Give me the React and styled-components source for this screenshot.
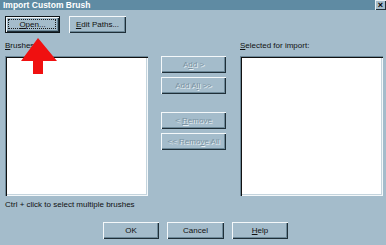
import React from "react"
import styled, { createGlobalStyle } from "styled-components"

const Global = createGlobalStyle`
    * { box-sizing: border-box; }
    body {
        margin: 0;
        background: #a4bccb;
    }
`

const Window = styled.div`
    position: relative;
    display: flex;
    flex-direction: column;
    width: 386px;
    height: 245px;
    overflow: hidden;
    background-color: #a4bccb;
    font-family: "Liberation Sans", Arial, sans-serif;
    font-size: 8px;
    color: #111;
`
const TitleBar = styled.div`
    display: flex;
    justify-content: space-between;
    align-items: center;
    height: 10px;
    padding-left: 3px;
    background-color: #5f8ba3;
    color: #fff;
    font-weight: bold;
    font-size: 8.5px;
`
const CloseBox = styled.div`
    display: flex;
    align-items: center;
    justify-content: center;
    width: 11px;
    height: 10px;
    background-color: #a4bccb;
    box-shadow: inset 1px 1px #e8f0f4, inset -1px -1px #1f2f38;
    color: #000;
    font-weight: bold;
    font-size: 9px;
    line-height: 1;
`
const Body = styled.div`
    display: flex;
    flex-direction: column;
    padding: 6px 3px 0 5px;
`
const Row = styled.div`
    display: flex;
    gap: ${p => p.$gap || 0}px;
    margin-top: ${p => p.$top || 0}px;
    margin-left: ${p => p.$left || 0}px;
`
const Button = styled.div`
    display: flex;
    align-items: center;
    justify-content: center;
    width: ${p => p.$w}px;
    height: 17px;
    margin-top: ${p => p.$top || 0}px;
    background-color: #a4bccb;
    box-shadow: ${p => p.$default
        ? "inset 0 0 0 1px #0d1418, inset 2px 2px #f4f8fa, inset -2px -2px #1f2f38, inset -3px -3px #6d8999"
        : "inset 1px 1px #f4f8fa, inset -1px -1px #1f2f38, inset -2px -2px #6d8999"};
    color: ${p => p.$disabled ? "#7b93a2" : "#111"};
    text-shadow: ${p => p.$disabled ? "1px 1px #e6eef2" : "none"};
    position: relative;
`
const Focus = styled.span`
    position: absolute;
    inset: 3px 4px 4px 3px;
    border: 1px dotted #1a1a1a;
`
const Column = styled.div`
    display: flex;
    flex-direction: column;
    width: 143px;
    margin-left: ${p => p.$left || 0}px;
`
const Middle = styled.div`
    display: flex;
    flex-direction: column;
    width: 65px;
    margin-left: 13px;
    padding-top: 15px;
`
const Label = styled.div`
    height: 15px;
    line-height: 10px;
`
const ListBox = styled.div`
    height: 140px;
    background-color: #fff;
    box-shadow: inset 1px 1px #6d8999, inset 2px 2px #111, inset -1px -1px #f4f8fa, inset -2px -2px #c4d4dd;
`
const Hint = styled.div`
    margin-top: 4px;
    height: 10px;
    line-height: 10px;
`
const Arrow = styled.svg`
    position: absolute;
    left: 20px;
    top: 37px;
`

const U = styled.u`
    text-decoration-thickness: 1px;
    text-underline-offset: 1px;
`

const App = () => {
    return (
        <Window>
            <Global />
            <TitleBar>
                <span>Import Custom Brush</span>
                <CloseBox>×</CloseBox>
            </TitleBar>
            <Body>
                <Row $gap={9}>
                    <Button $w={55} $default>
                        <Focus />
                        <span><U>O</U>pen...</span>
                    </Button>
                    <Button $w={57}><span><U>E</U>dit Paths...</span></Button>
                </Row>
                <Row $top={8}>
                    <Column>
                        <Label><U>B</U>rushes:</Label>
                        <ListBox />
                    </Column>
                    <Middle>
                        <Button $w={65} $disabled><span>A<U>d</U>d &gt;</span></Button>
                        <Button $w={65} $top={4} $disabled><span>Add A<U>l</U>l &gt;&gt;</span></Button>
                        <Button $w={65} $top={18} $disabled><span>&lt; <U>R</U>emove</span></Button>
                        <Button $w={65} $top={4} $disabled><span>&lt;&lt; Remo<U>v</U>e All</span></Button>
                    </Middle>
                    <Column $left={14}>
                        <Label><U>S</U>elected for import:</Label>
                        <ListBox />
                    </Column>
                </Row>
                <Hint>Ctrl + click to select multiple brushes</Hint>
                <Row $gap={8} $left={98} $top={12}>
                    <Button $w={56}><span>OK</span></Button>
                    <Button $w={57}><span>Cancel</span></Button>
                    <Button $w={56}><span><U>H</U>elp</span></Button>
                </Row>
            </Body>
            <Arrow width="40" height="40" viewBox="0 0 40 40">
                <polygon points="18,1 37,24 23,24 23,37 13,37 13,24 1,24" fill="#f01010" />
            </Arrow>
        </Window>
    )
}

export default App
